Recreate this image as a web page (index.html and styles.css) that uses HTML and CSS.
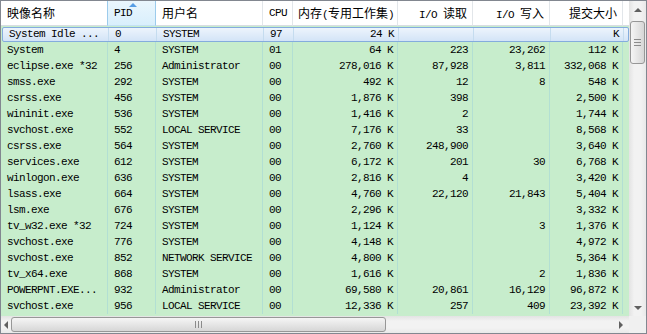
FILE: index.html
```html
<!DOCTYPE html>
<html lang="zh-CN">

<head>
    <meta charset="UTF-8">
    <title>进程</title>
    <link rel="stylesheet" href="styles.css">
</head>

<body>

    <div class="listview">
        <div class="list-main">
            <!-- column headers -->
            <div class="row head">
                <div class="hcell"><span class="zh">映像名称</span></div>
                <div class="hcell sorted">PID</div>
                <div class="hcell"><span class="zh">用户名</span></div>
                <div class="hcell num">CPU</div>
                <div class="hcell num cjk"><span class="zh">内存</span>(<span class="zh">专用工作集</span>)</div>
                <div class="hcell num">I/O <span class="zh">读取</span></div>
                <div class="hcell num">I/O <span class="zh">写入</span></div>
                <div class="hcell num"><span class="zh">提交大小</span></div>
                <div class="hcell filler"></div>
            </div>

            <div class="rows">
                <div class="row sel"><div>System Idle ...</div><div>0</div><div>SYSTEM</div><div>97</div><div class="r">24 K</div><div class="r"></div><div class="r"></div><div class="r">K</div><div></div></div>
                <div class="row"><div>System</div><div>4</div><div>SYSTEM</div><div>01</div><div class="r">64 K</div><div class="r">223</div><div class="r">23,262</div><div class="r">112 K</div><div></div></div>
                <div class="row"><div>eclipse.exe *32</div><div>256</div><div>Administrator</div><div>00</div><div class="r">278,016 K</div><div class="r">87,928</div><div class="r">3,811</div><div class="r">332,068 K</div><div></div></div>
                <div class="row"><div>smss.exe</div><div>292</div><div>SYSTEM</div><div>00</div><div class="r">492 K</div><div class="r">12</div><div class="r">8</div><div class="r">548 K</div><div></div></div>
                <div class="row"><div>csrss.exe</div><div>456</div><div>SYSTEM</div><div>00</div><div class="r">1,876 K</div><div class="r">398</div><div class="r"></div><div class="r">2,500 K</div><div></div></div>
                <div class="row"><div>wininit.exe</div><div>536</div><div>SYSTEM</div><div>00</div><div class="r">1,416 K</div><div class="r">2</div><div class="r"></div><div class="r">1,744 K</div><div></div></div>
                <div class="row"><div>svchost.exe</div><div>552</div><div>LOCAL SERVICE</div><div>00</div><div class="r">7,176 K</div><div class="r">33</div><div class="r"></div><div class="r">8,568 K</div><div></div></div>
                <div class="row"><div>csrss.exe</div><div>564</div><div>SYSTEM</div><div>00</div><div class="r">2,760 K</div><div class="r">248,900</div><div class="r"></div><div class="r">3,640 K</div><div></div></div>
                <div class="row"><div>services.exe</div><div>612</div><div>SYSTEM</div><div>00</div><div class="r">6,172 K</div><div class="r">201</div><div class="r">30</div><div class="r">6,768 K</div><div></div></div>
                <div class="row"><div>winlogon.exe</div><div>636</div><div>SYSTEM</div><div>00</div><div class="r">2,816 K</div><div class="r">4</div><div class="r"></div><div class="r">3,420 K</div><div></div></div>
                <div class="row"><div>lsass.exe</div><div>664</div><div>SYSTEM</div><div>00</div><div class="r">4,760 K</div><div class="r">22,120</div><div class="r">21,843</div><div class="r">5,404 K</div><div></div></div>
                <div class="row"><div>lsm.exe</div><div>676</div><div>SYSTEM</div><div>00</div><div class="r">2,296 K</div><div class="r"></div><div class="r"></div><div class="r">3,332 K</div><div></div></div>
                <div class="row"><div>tv_w32.exe *32</div><div>724</div><div>SYSTEM</div><div>00</div><div class="r">1,124 K</div><div class="r"></div><div class="r">3</div><div class="r">1,376 K</div><div></div></div>
                <div class="row"><div>svchost.exe</div><div>776</div><div>SYSTEM</div><div>00</div><div class="r">4,148 K</div><div class="r"></div><div class="r"></div><div class="r">4,972 K</div><div></div></div>
                <div class="row"><div>svchost.exe</div><div>852</div><div>NETWORK SERVICE</div><div>00</div><div class="r">4,800 K</div><div class="r"></div><div class="r"></div><div class="r">5,364 K</div><div></div></div>
                <div class="row"><div>tv_x64.exe</div><div>868</div><div>SYSTEM</div><div>00</div><div class="r">1,616 K</div><div class="r"></div><div class="r">2</div><div class="r">1,836 K</div><div></div></div>
                <div class="row"><div>POWERPNT.EXE...</div><div>932</div><div>Administrator</div><div>00</div><div class="r">69,580 K</div><div class="r">20,861</div><div class="r">16,129</div><div class="r">96,872 K</div><div></div></div>
                <div class="row"><div>svchost.exe</div><div>956</div><div>LOCAL SERVICE</div><div>00</div><div class="r">12,336 K</div><div class="r">257</div><div class="r">409</div><div class="r">23,392 K</div><div></div></div>
            </div>
        </div>

        <!-- vertical scrollbar -->
        <div class="vscroll">
            <div class="sbtn"><span class="arrow up"></span></div>
            <div class="vtrack">
                <div class="vthumb"><span class="grip"></span></div>
            </div>
            <div class="sbtn"><span class="arrow down"></span></div>
        </div>

        <!-- horizontal scrollbar -->
        <div class="hscroll">
            <div class="sbtn left-btn"><span class="arrow left"></span></div>
            <div class="htrack">
                <div class="hthumb"><span class="grip"></span></div>
            </div>
            <div class="sbtn"><span class="arrow right"></span></div>
        </div>
        <div class="corner"></div>
    </div>

</body>

</html>
```

FILE: styles.css
```css
body {
    margin: 0;
    padding: 0;
    background: #ffffff;
}

.listview {
    width: 647px;
    height: 334px;
    box-sizing: border-box;
    border: 1px solid #828790;
    display: grid;
    grid-template-columns: 628px 17px;
    grid-template-rows: 315px 17px;
    background: #c7edcc;
    font-family: "Liberation Mono", "Noto Sans CJK SC", monospace;
    font-size: 11px;
    letter-spacing: -0.6px;
    color: #000;
    overflow: hidden;
}

.list-main {
    overflow: hidden;
    background: #c7edcc;
}

.row {
    display: grid;
    grid-template-columns: 107px 48px 107px 30px 105px 75px 77px 73px 1fr;
    height: 16px;
}

.row > div {
    box-sizing: border-box;
    border-right: 1px solid #b2dfd3;
    padding: 0 5px 0 6px;
    line-height: 16px;
    white-space: nowrap;
    overflow: hidden;
}

.row > div:last-child {
    border-right: none;
}

.row > .r {
    text-align: right;
    padding: 0 4px 0 2px;
}

/* header */
.row.head {
    height: 25px;
    background: #ffffff;
}

.row.head > .hcell {
    position: relative;
    border-right: 1px solid #e2e6ea;
    border-bottom: 1px solid #d8dde3;
    line-height: 24px;
}

.row.head .zh {
    font-family: "Noto Sans CJK SC", sans-serif;
    font-size: 12px;
    letter-spacing: 0;
}

.row.head > .hcell.num {
    text-align: right;
    padding: 0 5px 0 2px;
}

.row.head > .hcell.cjk {
    padding: 0 3px 0 2px;
}

.row.head > .hcell.filler {
    border-right: none;
}

.row.head > .hcell.sorted {
    background: linear-gradient(#eaf6fd, #d9effc);
    border-right: 1px solid #9ccbec;
    border-left: 1px solid #9ccbec;
    border-bottom: 1px solid #c3e1f5;
    margin-left: -1px;
}

.row.head > .hcell.sorted::before {
    content: "";
    position: absolute;
    top: 2px;
    left: 21px;
    border-left: 4px solid transparent;
    border-right: 4px solid transparent;
    border-bottom: 4px solid #569de5;
}

/* selected row */
.row.sel {
    margin: 1px 0 0 1px;
    height: 15px;
    background: linear-gradient(#edf4fc, #d3e4f7);
    border: 1px solid #84acdd;
    border-radius: 2px;
    box-sizing: border-box;
    width: 627px;
    grid-template-columns: 106px 48px 107px 30px 105px 75px 77px 73px 1fr;
}

.row.sel > div {
    line-height: 13px;
    border-right-color: #c5dcef;
}

/* scrollbars */
.vscroll {
    display: flex;
    flex-direction: column;
    background: linear-gradient(90deg, #e3e3e3, #f2f2f2 30%, #f2f2f2 70%, #e9e9e9);
}

.sbtn {
    width: 17px;
    height: 17px;
    flex: none;
    display: flex;
    align-items: center;
    justify-content: center;
}

.vtrack {
    flex: 1;
    padding: 3px 1px 0 1px;
}

.vthumb {
    height: 43px;
    box-sizing: border-box;
    border: 1px solid #979797;
    border-radius: 3px;
    background: linear-gradient(90deg, #f5f5f5, #e6e6e6 50%, #d6d6d6);
    display: flex;
    align-items: center;
    justify-content: center;
}

.vthumb .grip {
    width: 7px;
    height: 5px;
    border-top: 1px solid #8b8b8b;
    border-bottom: 1px solid #8b8b8b;
    background: linear-gradient(transparent 2px, #8b8b8b 2px, #8b8b8b 3px, transparent 3px);
}

.hscroll {
    display: flex;
    background: linear-gradient(#e3e3e3, #f2f2f2 30%, #f2f2f2 70%, #e9e9e9);
}

.hscroll .left-btn {
    width: 10px;
}

.htrack {
    flex: 1;
    padding: 1px 0 1px 0;
}

.hthumb {
    width: 375px;
    height: 15px;
    box-sizing: border-box;
    border: 1px solid #979797;
    border-radius: 3px;
    background: linear-gradient(#f5f5f5, #e6e6e6 50%, #d6d6d6);
    display: flex;
    align-items: center;
    justify-content: center;
}

.hthumb .grip {
    width: 5px;
    height: 7px;
    border-left: 1px solid #8b8b8b;
    border-right: 1px solid #8b8b8b;
    background: linear-gradient(90deg, transparent 2px, #8b8b8b 2px, #8b8b8b 3px, transparent 3px);
}

.corner {
    background: #f0f0f0;
}

.arrow {
    width: 0;
    height: 0;
}

.arrow.up {
    border-left: 4px solid transparent;
    border-right: 4px solid transparent;
    border-bottom: 4px solid #606060;
}

.arrow.down {
    border-left: 4px solid transparent;
    border-right: 4px solid transparent;
    border-top: 4px solid #606060;
}

.arrow.left {
    border-top: 4px solid transparent;
    border-bottom: 4px solid transparent;
    border-right: 4px solid #606060;
}

.arrow.right {
    border-top: 4px solid transparent;
    border-bottom: 4px solid transparent;
    border-left: 4px solid #606060;
}
```
